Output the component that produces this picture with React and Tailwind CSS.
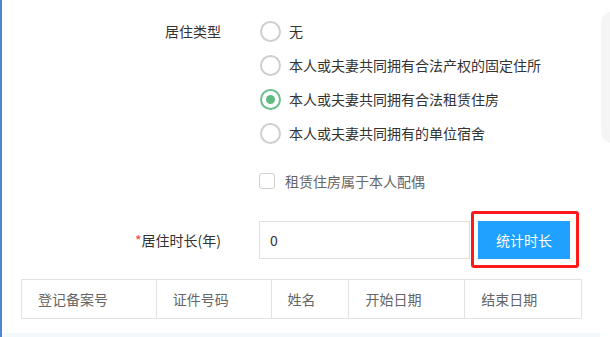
import React from 'react';

const options = [
  { label: '无', checked: false },
  { label: '本人或夫妻共同拥有合法产权的固定住所', checked: false },
  { label: '本人或夫妻共同拥有合法租赁住房', checked: true },
  { label: '本人或夫妻共同拥有的单位宿舍', checked: false },
];

const columns = [
  { title: '登记备案号', w: 'w-[134px]' },
  { title: '证件号码', w: 'w-[115px]' },
  { title: '姓名', w: 'w-[78px]' },
  { title: '开始日期', w: 'w-[116px]' },
  { title: '结束日期', w: 'w-[117px]' },
];

function Radio({ checked }) {
  return (
    <span
      className={`flex h-[21px] w-[21px] shrink-0 items-center justify-center rounded-full border-2 ${
        checked ? 'border-[#6cc08d]' : 'border-[#cfcfcf]'
      }`}
    >
      {checked ? <span className="h-[9px] w-[9px] rounded-full bg-[#5fbb80]" /> : null}
    </span>
  );
}

export default function App() {
  return (
    <div
      className="flex h-[337px] w-[610px] overflow-hidden bg-white text-[14px] text-[#333]"
      style={{ fontFamily: '"Noto Sans CJK SC", "Noto Sans", sans-serif' }}
    >
      <div className="flex w-[600px] shrink-0 flex-col border-l-2 border-[#4f86cf]">
        <div className="pt-[14px]">
          {/* 居住类型 */}
          <div className="flex">
            <div className="flex h-[34px] w-[219px] shrink-0 items-center justify-end">居住类型</div>
            <div className="ml-[39px] flex flex-col">
              {options.map((o) => (
                <div key={o.label} className="flex h-[34px] items-center gap-[8px]">
                  <Radio checked={o.checked} />
                  <span>{o.label}</span>
                </div>
              ))}
            </div>
          </div>

          {/* checkbox */}
          <div className="mt-[23px] flex h-[16px] items-center pl-[257px]">
            <span className="h-[16px] w-[16px] rounded-[3px] border border-[#d0d0d0]" />
            <span className="ml-[10px] text-[#666]">租赁住房属于本人配偶</span>
          </div>

          {/* 居住时长 */}
          <div className="mt-[32px] flex h-[38px] items-center">
            <div className="w-[219px] shrink-0 text-right">
              <span className="text-[#f04134]">*</span>居住时长(年)
            </div>
            <div className="ml-[38px] flex h-[38px] w-[211px] items-center border border-[#e0e0e0] pl-[10px]">0</div>
            <div className="relative ml-[8px]">
              <button
                type="button"
                className="h-[38px] w-[92px] bg-[#20a0ff] text-[14px] text-white"
              >
                统计时长
              </button>
              <span className="pointer-events-none absolute -bottom-[9px] -left-[7px] -right-[9px] -top-[10px] rounded-[3px] border-[3px] border-[#ff1a1a]" />
            </div>
          </div>

          {/* table */}
          <div className="ml-[19px] mt-[20px] flex h-[40px] w-[561px] border border-[#e2e2e2] text-[#666]">
            {columns.map((c, i) => (
              <div
                key={c.title}
                className={`flex h-full items-center pl-[16px] ${c.w} ${i > 0 ? 'border-l border-[#e2e2e2]' : ''}`}
              >
                {c.title}
              </div>
            ))}
          </div>
        </div>
        <div className="mt-auto h-[4px] bg-[#f3f8fd]" />
      </div>
      <div className="flex-1 pl-[1px] pt-[12px]">
        <div className="h-[131px] w-[20px] rounded-l-[10px] bg-[#f5f5f5]" />
      </div>
    </div>
  );
}
